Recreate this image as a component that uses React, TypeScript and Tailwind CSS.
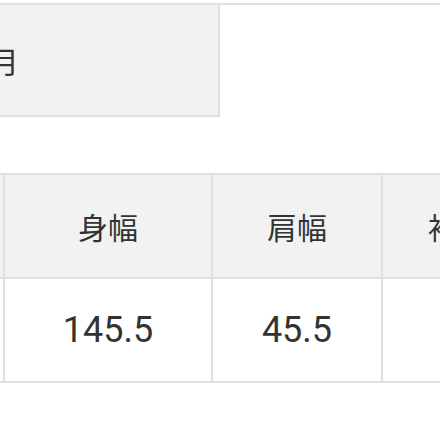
import React from "react";

const cjk = { fontFamily: '"Noto Sans CJK JP", "Noto Sans", sans-serif' };
const num = { fontFamily: 'Roboto, "Noto Sans", sans-serif' };

export default function App() {
  return (
    <div className="w-[440px] h-[440px] overflow-hidden bg-white text-[#333]" style={cjk}>
      <div className="h-[3px]" />
      <div className="flex border-t-2 border-[#e0e0e0] w-[440px]">
        <div className="w-[220px] h-[112px] shrink-0 bg-[#f2f2f2] border-r-2 border-b-2 border-[#e0e0e0] flex items-center overflow-hidden">
          <span className="text-[30px] leading-none ml-[-11px]">月</span>
        </div>
        <div className="flex-1 h-[112px] flex items-center overflow-hidden">
          <span className="text-[30px] leading-none ml-[217px] whitespace-nowrap">丨</span>
        </div>
      </div>
      <div className="h-[56px]" />
      <div className="flex flex-col w-[620px] border-t-2 border-b-2 border-[#e0e0e0]">
        <div className="flex h-[104px] bg-[#f2f2f2] border-b-2 border-[#e0e0e0]">
          <div className="w-[5px] shrink-0 border-r-2 border-[#e0e0e0]" />
          <div className="w-[208px] shrink-0 border-r-2 border-[#e0e0e0] flex items-center justify-center text-[30px] leading-none">身幅</div>
          <div className="w-[170px] shrink-0 border-r-2 border-[#e0e0e0] flex items-center justify-center text-[30px] leading-none">肩幅</div>
          <div className="w-[182px] shrink-0 border-r-2 border-[#e0e0e0] flex items-center justify-center text-[30px] leading-none">袖口幅</div>
        </div>
        <div className="flex h-[102px] bg-white">
          <div className="w-[5px] shrink-0 border-r-2 border-[#e0e0e0]" />
          <div className="w-[208px] shrink-0 border-r-2 border-[#e0e0e0] flex items-center justify-center text-[36px] leading-none" style={num}>145.5</div>
          <div className="w-[170px] shrink-0 border-r-2 border-[#e0e0e0] flex items-center justify-center text-[36px] leading-none" style={num}>45.5</div>
          <div className="w-[182px] shrink-0 border-r-2 border-[#e0e0e0] flex items-center justify-center text-[36px] leading-none" style={num}>12</div>
        </div>
      </div>
    </div>
  );
}
